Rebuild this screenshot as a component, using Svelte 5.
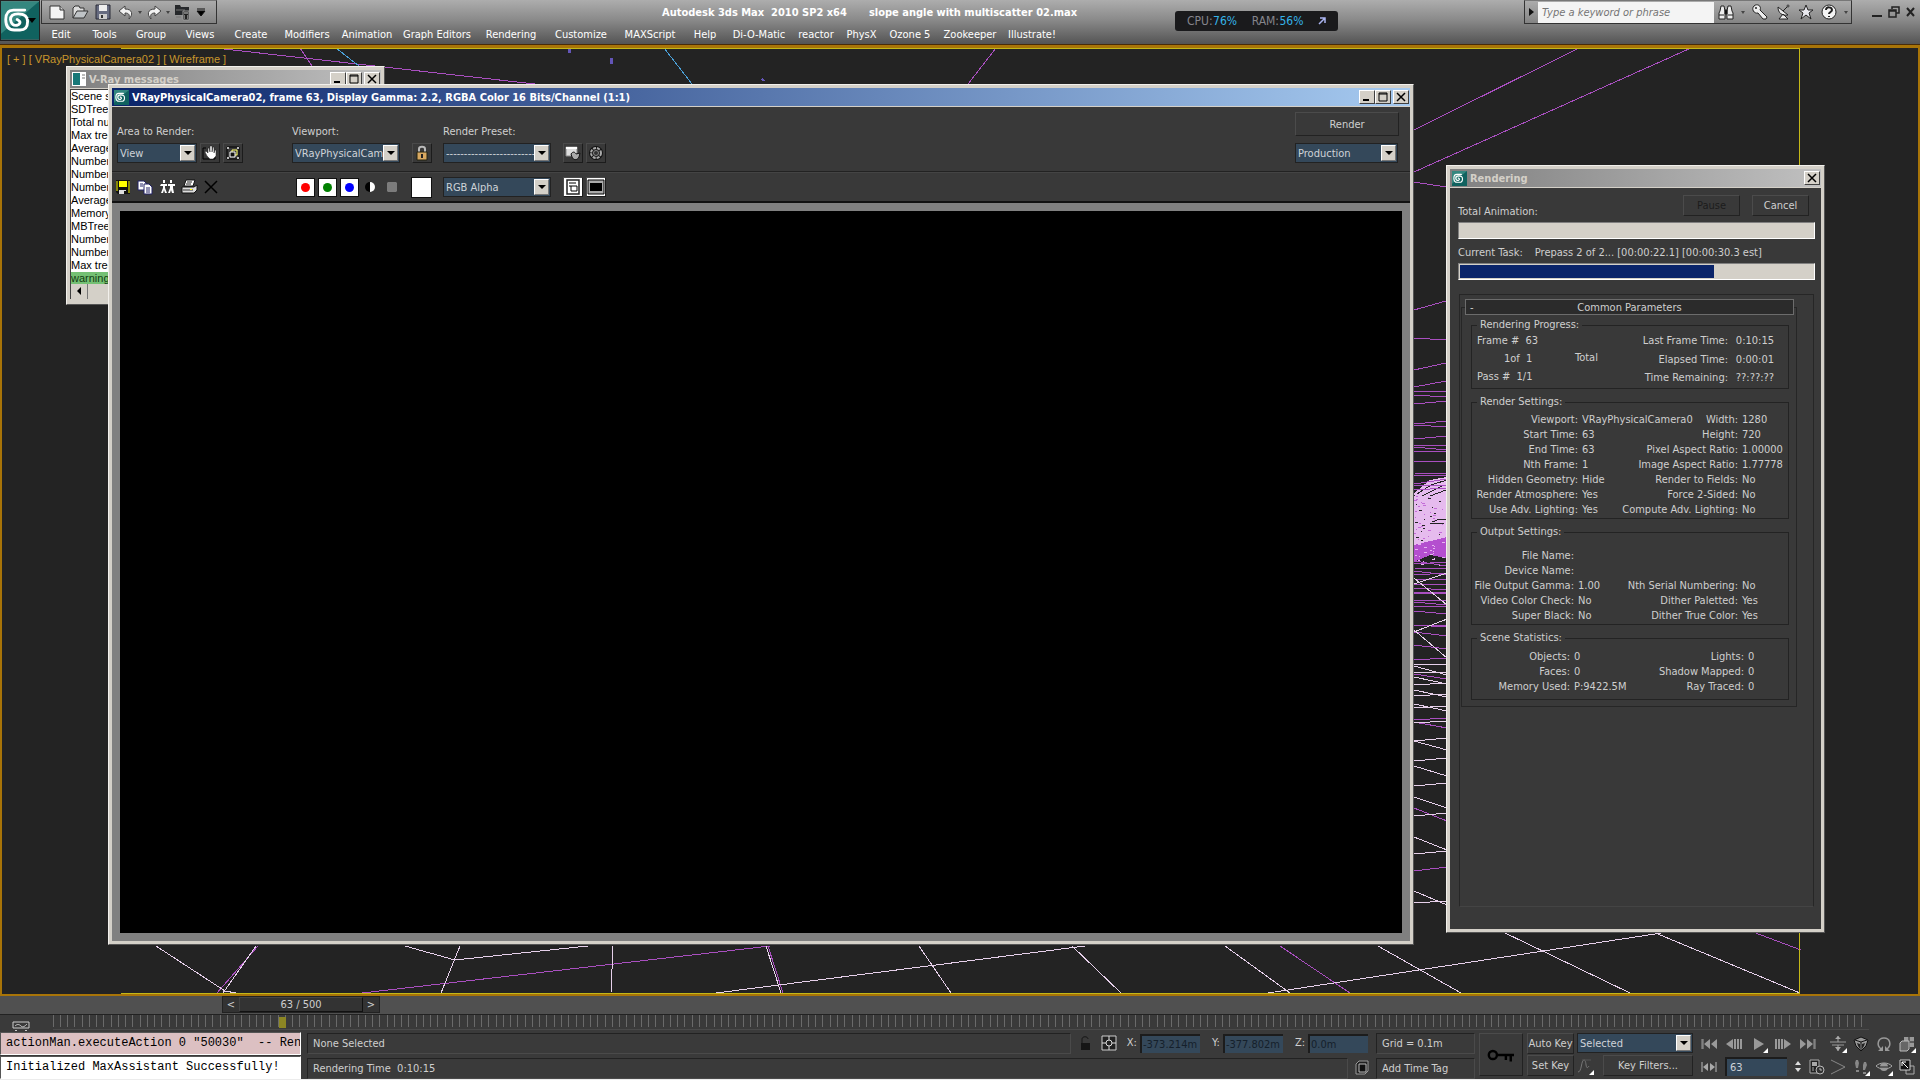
<script lang="ts">
    const menus = ["Edit", "Tools", "Group", "Views", "Create", "Modifiers", "Animation", "Graph Editors", "Rendering", "Customize", "MAXScript", "Help", "Di-O-Matic", "reactor", "PhysX", "Ozone 5", "Zookeeper", "Illustrate!"];

    const messages = ["Scene scale", "SDTree: built", "Total number", "Max tree depth", "Average tree", "Number of rays", "Number of leafs", "Number of faces", "Average faces", "Memory usage", "MBTree: built", "Number of rays", "Number of leafs", "Max tree size"];

    const settings = [
        ["Viewport:", "VRayPhysicalCamera02", "Width:", "1280"],
        ["Start Time:", "63", "Height:", "720"],
        ["End Time:", "63", "Pixel Aspect Ratio:", "1.00000"],
        ["Nth Frame:", "1", "Image Aspect Ratio:", "1.77778"],
        ["Hidden Geometry:", "Hide", "Render to Fields:", "No"],
        ["Render Atmosphere:", "Yes", "Force 2-Sided:", "No"],
        ["Use Adv. Lighting:", "Yes", "Compute Adv. Lighting:", "No"]
    ];
    const output = [
        ["File Name:", "", "", ""],
        ["Device Name:", "", "", ""],
        ["File Output Gamma:", "1.00", "Nth Serial Numbering:", "No"],
        ["Video Color Check:", "No", "Dither Paletted:", "Yes"],
        ["Super Black:", "No", "Dither True Color:", "Yes"]
    ];
    const statistics = [
        ["Objects:", "0", "Lights:", "0"],
        ["Faces:", "0", "Shadow Mapped:", "0"],
        ["Memory Used:", "P:9422.5M", "Ray Traced:", "0"]
    ];

    let frame = $state("63");
    let channels = $state([true, true, true]);
    let taskProgress = $state(72);

    // wireframe edges: x1 y1 x2 y2
    const violet = [
        [215, 48, 535, 84], [300, 48, 312, 66], [996, 48, 968, 84], [1579, 48, 1414, 130], [1691, 48, 1414, 172],
        [1414, 182, 1446, 187], [1414, 310, 1446, 301], [1414, 338, 1446, 340], [1414, 370, 1446, 363],
        [1414, 387, 1446, 381], [1414, 391, 1446, 392], [1414, 395, 1446, 397],
        [258, 946, 217, 993], [362, 993, 770, 946], [768, 946, 783, 993], [1280, 946, 1350, 993], [1753, 932, 1801, 950]
    ];
    const pale = [
        [156, 946, 225, 991], [225, 991, 236, 993], [256, 946, 223, 993], [405, 946, 455, 960], [455, 960, 588, 946],
        [460, 946, 441, 993], [613, 946, 611, 993], [766, 946, 781, 993], [919, 946, 951, 993], [716, 993, 1085, 946],
        [1072, 946, 1121, 993], [1225, 946, 1290, 993], [1268, 993, 1668, 932], [1378, 946, 1461, 993],
        [1503, 932, 1630, 993], [1653, 932, 1800, 993]
    ];
    // edges seen in the strip between the two windows: left y, right y
    const stripViolet = [
        [404, 401], [424, 421], [425, 427], [439, 436], [445, 445], [447, 450], [452, 451], [462, 461], [473, 474],
        [476, 475], [484, 479], [486, 485], [490, 488], [561, 566], [564, 562], [568, 569], [571, 575], [575, 573],
        [579, 580], [585, 584], [588, 590], [592, 592], [594, 593], [600, 600], [602, 605], [606, 606], [611, 614],
        [625, 627], [626, 625], [632, 636], [645, 649], [660, 658], [674, 679], [720, 718], [722, 728], [808, 821], [871, 867]
    ];
    const stripPale = [
        [578, 605], [584, 573], [630, 658], [632, 619], [665, 664], [666, 675], [673, 672], [677, 684], [685, 683],
        [690, 697], [696, 694], [704, 711], [708, 706], [723, 721], [741, 738], [741, 750], [761, 758], [766, 776],
        [786, 783], [797, 808], [816, 813], [837, 850], [854, 851], [891, 905], [903, 901]
    ];
    const speckles = Array.from({ length: 70 }, (_, i) => [1414 + ((i * i * 7) % 31), 495 + ((i * 31) % 71), 1 + (i % 3)]);

    const lines = (list: number[][]) => list.map(([a, b, c, d]) => `M${a} ${b}L${c} ${d}`).join("");
    const strip = (list: number[][]) => list.map(([a, b]) => `M1414 ${a}L1447 ${b}`).join("");
    const ticks = Array.from({ length: 251 }, (_, i) => `M${i} 0V12`).join("");

    const icons: Record<string, string> = {
        new: `<path d="M1 2h10l4 4v9H1z" fill="#f4f4f4" stroke="#333"/><path d="M11 2v4h4" fill="#ccc" stroke="#333"/>`,
        open: `<path d="M1 14V4l2-2h4l1 2h4v3" fill="#ddd" stroke="#333"/><path d="M1 14l4-7h11l-4 7z" fill="#bfc3c6" stroke="#333"/>`,
        disk: `<path d="M1 1h14v14H1z" fill="#666b80" stroke="#2b2d38"/><path d="M4 1h8v6H4z" fill="#eee"/><path d="M4 10h8v5H4z" fill="#ccc"/><path d="M6 11h2v3H6z" fill="#333"/>`,
        undo: `<path d="M7 2L1 7l6 5V9c4 0 5 2 4 6 4-4 4-10-4-10z" fill="#f2f2f2" stroke="#444"/>`,
        redo: `<path d="M9 2l6 5-6 5V9c-4 0-5 2-4 6C1 11 1 5 9 5z" fill="#f2f2f2" stroke="#444"/>`,
        project: `<path d="M1 1h5l1 2h8v8H1z" fill="#26282b"/><path d="M2 6h9M2 13h5" stroke="#777"/><path d="M9 7h6v9H9z" fill="#222" stroke="#999"/><path d="M10 9h4M10 12h1M13 12h1M10 14h1M13 14h1" stroke="#ccc"/>`,
        drop: `<path d="M4 5h8M4 7h8l-4 5z" stroke="#111"/>`,
        binoculars: `<path d="M2 7l1-5h3l1 5v8H1V9zM9 7l1-5h3l1 5 1 2v6H9z" fill="#eee" stroke="#222"/><path d="M7 6h2v4H7zM1 11h5M10 11h5" stroke="#222"/>`,
        key: `<path d="M2 2c3-3 8 0 6 4l7 7-1 2h-3l-5-6C2 10-1 5 2 2z" fill="#eee" stroke="#222"/><circle cx="4" cy="4" r="1" fill="#222"/>`,
        dish: `<path d="M3 3c0 6 4 9 10 8zM4 15h9l-5-5zM8 7l5-5" fill="#eee" stroke="#222"/><circle cx="13" cy="2" r="1" fill="#fff" stroke="#222"/>`,
        star: `<path d="M8 1l2 5h5l-4 3 2 6-5-4-5 4 2-6-4-3h5z" fill="#e8e8ee" stroke="#222"/>`,
        help: `<circle cx="8" cy="8" r="7" fill="#f4f4f4" stroke="#222"/><path d="M5 6c0-4 6-3 6 0 0 2-3 2-3 4M8 12v1" fill="none" stroke="#222" stroke-width="2"/>`,
        hand: `<path d="M4 3H1v11h12v-3" fill="none" stroke="#000"/><path d="M5 11L3 7l1-1 2 2V3h1l1 4V1h2v6l1-5h1v6l1-3h1v6l-3 3H8z" fill="#fff" stroke="#222" stroke-width=".5"/>`,
        region: `<path d="M2 2h12v12H2z" fill="none" stroke="#000"/><path d="M2 2h2v2H2zM12 2h2v2h-2zM2 12h2v2H2zM12 12h2v2h-2z" fill="#bbb"/><path d="M7 5h5v5H7z" fill="none" stroke="#ff6"/><path d="M5 7h5v5H5z" fill="#111" stroke="#fff"/>`,
        lock: `<path d="M5 7V4c0-3 6-3 6 0v3" fill="none" stroke="#bbb" stroke-width="2"/><path d="M3 7h10v8H3z" fill="#d8a860" stroke="#221"/><path d="M8 9v4" stroke="#222" stroke-width="2"/>`,
        setup: `<path d="M1 2h11v9H1z" fill="#ddd" stroke="#888"/><path d="M1 2h11v2H1z" fill="#fff"/><path d="M6 9c2-3 4-2 5 0l4-1-1 4c-2 4-6 3-7 0z" fill="#aaa" stroke="#111"/>`,
        environment: `<circle cx="8" cy="8" r="7" fill="#111"/><circle cx="8" cy="8" r="5" fill="#222" stroke="#aaa" stroke-width="2" stroke-dasharray="3 1"/><circle cx="8" cy="8" r="2.5" fill="#333" stroke="#888"/>`,
        save: `<path d="M1 1h14v14H3l-2-2z" fill="#111"/><path d="M4 2h8v6H4z" fill="#ff0"/><path d="M2 2v10M14 2v12" stroke="#ff0"/><path d="M4 11h7v4H4z" fill="#ddd"/><path d="M9 12h2v3H9z" fill="#111"/>`,
        copy: `<path d="M1 2h6l2 2v7H1z" fill="#fff" stroke="#226"/><path d="M7 5h5l3 3v7H7z" fill="#fff" stroke="#226"/><path d="M3 5h3M3 7h3M9 9h4M9 11h4M9 13h4" stroke="#226"/>`,
        clone: `<path d="M4 1h2v3H4zM2 5h6v2H6v2l2 5H6l-1-3-1 3H2l2-5V7H1zM11 1h2v3h-2zM9 5h7v2h-2v2l1 5h-2l-1-3-1 3H9l2-5V7H9z" fill="#fff"/>`,
        print: `<path d="M5 1h9l-2 6H3z" fill="#fff" stroke="#111"/><path d="M6 3h5M5 5h5" stroke="#222"/><path d="M1 8h12l3-2v5l-3 3H1z" fill="#ddd" stroke="#111"/><path d="M2 11h10" stroke="#333"/><path d="M9 10h2v1H9z" fill="#ff0"/>`,
        clear: `<path d="M2 2l12 12M14 2L2 14" stroke="#000" stroke-width="1.5"/>`,
        alpha: `<path d="M8 3a5 5 0 000 10z" fill="#000"/><path d="M8 3a5 5 0 010 10z" fill="#fff"/>`,
        mono: `<path d="M4 3h8l1 1v8l-1 1H4l-1-1V4z" fill="#7c7c7c"/>`,
        overlay: `<path d="M2 1h12v14H2z" fill="#fff" stroke="#222" stroke-width="1.5"/><path d="M4 4h7M4 7h2" stroke="#000"/><path d="M6 7h6v5H6z" fill="#fff" stroke="#000"/>`,
        ui: `<path d="M0 1h16v14H0z" fill="#aaa" stroke="#000"/><path d="M2 4h12v8H2z" fill="#000"/>`,
        curves: `<path d="M0 4h16v6H0z" fill="none" stroke="#ccc"/><path d="M2 8c2-2 4-2 6 0s4 0 6-2M2 13l1-1 1 1M12 13l1-1 1 1" fill="none" stroke="#ccc"/>`,
        padlock: `<path d="M5 8V4c0-3 6-3 6 0" fill="none" stroke="#161616"/><path d="M4 8h9v7H4z" fill="#161616"/>`,
        transform: `<path d="M1 1h14v14H1z" fill="#222" stroke="#ccc"/><circle cx="8" cy="8" r="3" fill="none" stroke="#ddd"/><path d="M8 1v4M8 11v4M1 8h4M11 8h4" stroke="#ddd"/>`,
        cube: `<path d="M2 4l3-3h9v10l-3 3H2z" fill="#222" stroke="#999"/><path d="M5 4h7v8H5z" fill="#111" stroke="#bbb"/>`,
        start: `<path d="M1 3v10M2 3v10" stroke="#999"/><path d="M9 3v10L3 8zM16 3v10l-6-5z" fill="#999"/>`,
        prev: `<path d="M7 3v10L0 8z" fill="#999"/><path d="M9 3v10M12 3v10M15 3v10" stroke="#999" stroke-width="2"/>`,
        play: `<path d="M3 2v12l10-6z" fill="#999"/>`,
        next: `<path d="M9 3v10l7-5z" fill="#999"/><path d="M1 3v10M4 3v10M7 3v10" stroke="#999" stroke-width="2"/>`,
        end: `<path d="M14 3v10M15 3v10" stroke="#999"/><path d="M0 3v10l6-5zM7 3v10l6-5z" fill="#999"/>`,
        keymode: `<path d="M1 3v10M15 3v10" stroke="#bbb"/><path d="M7 4v8L2 8zM9 4v8l5-4z" fill="#aaa"/>`,
        timeconfig: `<path d="M1 1h9v13H1z" fill="#222" stroke="#aaa"/><path d="M3 3h5v4H3z" fill="#aaa"/><path d="M3 9h2M3 11h2" stroke="#aaa"/><circle cx="11" cy="11" r="4" fill="#333" stroke="#bbb"/><path d="M11 9v2h2" fill="none" stroke="#bbb"/>`,
        dolly: `<path d="M8 0v6M8 9v6" stroke="#aaa"/><path d="M5 3l3-3 3 3zM5 11h6l-3 4z" fill="#aaa"/><path d="M0 6h16M2 9h12" stroke="#999"/>`,
        perspective: `<path d="M1 4l7-3 7 3-2 6-5 5-5-5z" fill="#999" stroke="#111"/><path d="M2 4l6 2 6-2M8 6v8" fill="none" stroke="#111"/><path d="M4 7l3 1v5L5 10zM12 7L9 8v5l2-3z" fill="#222"/>`,
        roll: `<path d="M5 13C0 9 2 2 8 2s8 7 3 11" fill="none" stroke="#999" stroke-width="1.5"/><path d="M2 15h5v-5zM14 15H9v-5z" fill="#999"/>`,
        extents: `<path d="M5 1h10v10H5z" fill="#999"/><path d="M10 1v10M5 6h10" stroke="#222"/><path d="M1 7l2-2h7v8l-2 2H1z" fill="#666" stroke="#bbb"/>`,
        fov: `<path d="M1 1l14 7-14 7" fill="none" stroke="#888"/>`,
        walk: `<path d="M3 1h2l1 3-1 5H3L2 4zM3 11h3v2H3zM11 3h2l1 3-2 5h-2V6zM10 13h3v2h-3z" fill="#888"/>`,
        orbit: `<path d="M0 7c4-4 12-4 16 0-4 4-12 4-16 0z" fill="none" stroke="#aaa"/><circle cx="8" cy="8" r="4" fill="#999"/><path d="M4 8h8" stroke="#222"/>`,
        maximize: `<path d="M7 7h8v8H7z" fill="none" stroke="#aaa"/><path d="M1 1h10v10H1z" fill="#111" stroke="#ccc"/><path d="M9 9L3 3M3 7V3h4" fill="none" stroke="#fff"/>`,
        curve: `<path d="M1 14c4 0 3-12 6-12s1 12 5 6" fill="none" stroke="#777"/><path d="M5 2h9" stroke="#555"/>`,
        bigkey: `<circle cx="3" cy="8" r="2.5" fill="none" stroke="#000" stroke-width="1.5"/><path d="M6 8h10M11 8v3M14 8v4" stroke="#000" stroke-width="1.5"/>`
    };
    const playback = ["start", "prev", "play", "next", "end"];
    const navigation = ["dolly", "perspective", "roll", "extents", "fov", "walk", "orbit", "maximize"];
    const flyouts = ["play", "dolly", "extents", "walk", "orbit", "curve"];
</script>

{#snippet icon(name: string)}
    <svg class="icon" viewBox="0 0 16 16" aria-hidden="true">
        {@html icons[name]}
        {#if flyouts.includes(name)}<path d="M17 12v5h-5z" fill="#fff" />{/if}
    </svg>
{/snippet}

{#snippet logo()}
    <svg class="logo" viewBox="0 0 40 40" aria-hidden="true">
        <rect width="40" height="40" fill="#10625f" />
        <path d="M0 0h40L0 34z" fill="#34877f" />
        <path d="M25 9H13Q5 9 5 19q0 11 9 11h6q8 0 8-9 0-8-10-8-8 0-8 6 1 7 7 6 6-3 0-6" fill="none" stroke="#fff" stroke-width="3" stroke-linecap="round" />
    </svg>
{/snippet}

{#snippet windowButton(kind: string)}
    <button class="win-button {kind}" aria-label={kind}>
        <svg viewBox="0 0 12 10" aria-hidden="true">
            {#if kind === "minimize"}
                <path d="M2 8h6" stroke="#000" stroke-width="2" />
            {:else if kind === "maximize"}
                <path d="M2 1h8v8H2zM2 2h8" fill="none" stroke="#000" stroke-width="1" />
            {:else}
                <path d="M2 1l8 8M10 1L2 9" stroke="#000" stroke-width="1.5" />
            {/if}
        </svg>
    </button>
{/snippet}

{#snippet dropdown(id: string, label: string, value: string)}
    <span class="dropdown {id}">
        <select {id} aria-label={label}><option>{value}</option></select>
        <span class="arrow"><svg viewBox="0 0 8 4" aria-hidden="true"><path d="M0 0h8L4 4z" /></svg></span>
    </span>
{/snippet}

{#snippet pairs(rows: string[][])}
    {#each rows as [label, value, label2, value2]}
        <div class="pair-row">
            <dt>{label}</dt><dd><span>{value}</span></dd>
            <dt>{label2}</dt><dd>{value2}</dd>
        </div>
    {/each}
{/snippet}

<div class="app">
    <header>
        <button class="app-button" aria-label="Application menu">
            {@render logo()}
            <svg class="caret" viewBox="0 0 8 5" aria-hidden="true"><path d="M0 0h8L4 5z" /></svg>
        </button>
        <div class="header-rows">
            <div class="title-row">
                <div class="quick">
                    <button aria-label="New">{@render icon("new")}</button>
                    <button aria-label="Open">{@render icon("open")}</button>
                    <button aria-label="Save">{@render icon("disk")}</button>
                    <button aria-label="Undo">{@render icon("undo")}</button>
                    <i class="tiny"></i>
                    <button aria-label="Redo">{@render icon("redo")}</button>
                    <i class="tiny"></i>
                    <button aria-label="Project folder">{@render icon("project")}</button>
                    <button aria-label="Customize toolbar" class="small">{@render icon("drop")}</button>
                </div>
                <div class="title"><span>Autodesk 3ds Max&nbsp; 2010 SP2 x64</span><span>slope angle with multiscatter 02.max</span></div>
                <div class="search">
                    <i class="side-arrow"></i>
                    <input type="text" placeholder="Type a keyword or phrase" aria-label="Search" />
                    <button aria-label="Find">{@render icon("binoculars")}</button>
                    <i class="tiny"></i>
                    <button aria-label="Subscription">{@render icon("key")}</button>
                    <button aria-label="Communication">{@render icon("dish")}</button>
                    <button aria-label="Favorites">{@render icon("star")}</button>
                    <button aria-label="Help">{@render icon("help")}</button>
                    <i class="tiny"></i>
                </div>
                <div class="app-controls">
                    <button aria-label="Minimize application"><svg viewBox="0 0 12 12"><path d="M1 10h10" stroke="#222" stroke-width="2" /></svg></button>
                    <button aria-label="Restore application"><svg viewBox="0 0 12 12"><path d="M4 3V1h7v6H8M1 4h7v7H1zM1 5h7" fill="none" stroke="#222" stroke-width="1.5" /></svg></button>
                    <button aria-label="Close application"><svg viewBox="0 0 12 12"><path d="M2 2l7 8M9 2l-7 8" stroke="#222" stroke-width="2" /></svg></button>
                </div>
            </div>
            <nav>
                {#each menus as menu}
                    <button>{menu}</button>
                {/each}
            </nav>
        </div>
        <div class="meter">
            <span>CPU: <b>76%</b></span><span>RAM: <b>56%</b></span>
            <svg viewBox="0 0 8 8" aria-hidden="true"><path d="M1 7l6-6M2 1h5v5" fill="none" stroke="#aab4f0" stroke-width="1.5" /></svg>
        </div>
    </header>

    <main>
        <svg class="wireframe" viewBox="0 48 1920 946" preserveAspectRatio="none" shape-rendering="crispEdges" aria-hidden="true">
            <path d="M1414 493L1430 480L1447 477V548L1414 553z" fill="#e6bbee" />
            <path d="M1414 545L1447 537V558L1430 555L1414 562z" fill="#b44fcf" />
            {#each speckles as [x, y, w]}
                <rect {x} {y} width={w} height="1" fill={y > 540 ? "#e6b4f0" : y % 3 ? "#c46bd8" : "#232323"} />
            {/each}
            <path d="M1432 522l8-3h7M1430 524l14-1M1417 494l14-9 16-5M1422 496l20-10M1430 496l16-6" fill="none" stroke="#232323" />
            <path d={lines(violet) + strip(stripViolet)} fill="none" stroke="#a94fc0" />
            <path d={lines(pale) + strip(stripPale)} fill="none" stroke="#e6d0ea" />
            <path d="M336 48L359 66M664 48L692 84" stroke="#4aa0d8" />
            <path d="M568 48h3v5h-3zM610 58h3v6h-3zM760 80l2-2 3 3h-2z" fill="#6355b8" />
            <path d="M121 48H1799V993H121" fill="none" stroke="#c4b818" />
        </svg>
        <div class="view-label">[ + ] [ VRayPhysicalCamera02 ] [ Wireframe ]</div>

        <section class="window messages">
            <div class="titlebar inactive">
                <svg class="doc" viewBox="0 0 14 14" aria-hidden="true"><path d="M0 0h14v14H0z" fill="#fff" /><path d="M1 1h7v12H1z" fill="#187878" /><path d="M10 3h3M10 6h3" stroke="#777" /></svg>
                <h2>V-Ray messages</h2>
                {@render windowButton("minimize")}{@render windowButton("maximize")}{@render windowButton("close")}
            </div>
            <ul>
                {#each messages as message}
                    <li>{message}</li>
                {/each}
                <li class="warning">warning: no camera</li>
            </ul>
            <div class="scroll"><button aria-label="Scroll left"><svg viewBox="0 0 4 8"><path d="M4 0v8L0 4z" /></svg></button><span></span></div>
        </section>

        <section class="window render">
            <div class="titlebar active">
                {@render logo()}
                <h2>VRayPhysicalCamera02, frame 63, Display Gamma: 2.2, RGBA Color 16 Bits/Channel (1:1)</h2>
                {@render windowButton("minimize")}{@render windowButton("maximize")}{@render windowButton("close")}
            </div>
            <div class="toolbar first">
                <div>
                    <label for="area">Area to Render:</label>
                    <div class="tools">
                        {@render dropdown("area", "Area to Render", "View")}
                        <button class="tool" aria-label="Edit region">{@render icon("hand")}</button>
                        <button class="tool" aria-label="Auto region">{@render icon("region")}</button>
                    </div>
                </div>
                <div>
                    <label for="viewport">Viewport:</label>
                    <div class="tools">
                        {@render dropdown("viewport", "Viewport", "VRayPhysicalCamera02")}
                        <button class="tool apart" aria-label="Lock to viewport">{@render icon("lock")}</button>
                    </div>
                </div>
                <div>
                    <label for="preset">Render Preset:</label>
                    <div class="tools">
                        {@render dropdown("preset", "Render Preset", "-------------------------")}
                        <button class="tool apart" aria-label="Render setup">{@render icon("setup")}</button>
                        <button class="tool" aria-label="Environment">{@render icon("environment")}</button>
                    </div>
                </div>
                <div class="go">
                    <button class="flat">Render</button>
                    {@render dropdown("production", "Render mode", "Production")}
                </div>
            </div>
            <div class="toolbar second">
                <div class="tools plain">
                    <button aria-label="Save image">{@render icon("save")}</button>
                    <button aria-label="Copy image">{@render icon("copy")}</button>
                    <button aria-label="Clone window">{@render icon("clone")}</button>
                    <button aria-label="Print image">{@render icon("print")}</button>
                    <button aria-label="Clear">{@render icon("clear")}</button>
                </div>
                <div class="tools channels">
                    {#each ["red", "green", "blue"] as color, i}
                        <button class="channel {color}" aria-label={`${color} channel`} aria-pressed={channels[i]} onclick={() => channels[i] = !channels[i]}></button>
                    {/each}
                    <button class="bare" aria-label="Alpha channel">{@render icon("alpha")}</button>
                    <button class="bare" aria-label="Monochrome">{@render icon("mono")}</button>
                    <button class="swatch" aria-label="Pixel color"></button>
                </div>
                <div class="tools">
                    {@render dropdown("channel-display", "Channel display", "RGB Alpha")}
                    <button class="tool white apart" aria-label="Toggle overlays">{@render icon("overlay")}</button>
                    <button class="tool white" aria-label="Toggle interface">{@render icon("ui")}</button>
                </div>
            </div>
            <div class="frame"><div class="canvas"></div></div>
        </section>

        <section class="window rendering">
            <div class="titlebar inactive">
                {@render logo()}
                <h2>Rendering</h2>
                {@render windowButton("close")}
            </div>
            <div class="progress">
                <div class="progress-head">
                    <span>Total Animation:</span>
                    <button class="flat" disabled>Pause</button>
                    <button class="flat">Cancel</button>
                </div>
                <div class="bar"></div>
                <p><span>Current Task:</span><span>Prepass 2 of 2... [00:00:22.1] [00:00:30.3 est]</span></p>
                <div class="bar"><div style:width="{taskProgress}%"></div></div>
            </div>
            <div class="panel">
                <div class="rollout">
                    <button class="rollout-head"><span>-</span>Common Parameters</button>
                    <fieldset>
                        <legend>Rendering Progress:</legend>
                        <div class="current">
                            <div><p>Frame #&nbsp; 63</p><p class="indent">1of&nbsp; 1</p><p>Pass #&nbsp; 1/1</p></div>
                            <p class="total">Total</p>
                            <dl>
                                <dt>Last Frame Time:</dt><dd>0:10:15</dd>
                                <dt>Elapsed Time:</dt><dd>0:00:01</dd>
                                <dt>Time Remaining:</dt><dd>??:??:??</dd>
                            </dl>
                        </div>
                    </fieldset>
                    <fieldset>
                        <legend>Render Settings:</legend>
                        <dl class="pairs">{@render pairs(settings)}</dl>
                    </fieldset>
                    <fieldset>
                        <legend>Output Settings:</legend>
                        <dl class="pairs output">{@render pairs(output)}</dl>
                    </fieldset>
                    <fieldset>
                        <legend>Scene Statistics:</legend>
                        <dl class="pairs statistics">{@render pairs(statistics)}</dl>
                    </fieldset>
                </div>
            </div>
        </section>
    </main>

    <div class="slider">
        <div>
            <button aria-label="Previous frame">&lt;</button>
            <span>63 / 500</span>
            <button aria-label="Next frame">&gt;</button>
        </div>
    </div>

    <div class="trackbar">
        <button aria-label="Open mini curve editor">{@render icon("curves")}</button>
        <div class="track">
            <svg viewBox="0 0 250 12" preserveAspectRatio="none" shape-rendering="crispEdges" aria-hidden="true">
                <path d={ticks} stroke="#6a6a6a" vector-effect="non-scaling-stroke" />
            </svg>
            <i style:left="{+frame / 5}%"></i>
        </div>
    </div>

    <footer>
        <div class="listener">
            <div class="macro">actionMan.executeAction 0 "50030"&nbsp; -- Render</div>
            <div>Initialized MaxAssistant Successfully!</div>
        </div>
        <div class="status">
            <div class="status-row">
                <div class="prompt">None Selected</div>
                <button class="bare" aria-label="Selection lock">{@render icon("padlock")}</button>
                <button class="bare" aria-label="Absolute transform">{@render icon("transform")}</button>
                <label>X:<input value="-373.214m" /></label>
                <label>Y:<input value="-377.802m" /></label>
                <label>Z:<input value="0.0m" /></label>
                <div class="cell">Grid = 0.1m</div>
            </div>
            <div class="status-row">
                <div class="prompt">Rendering Time&nbsp; 0:10:15</div>
                <button class="bare" aria-label="Adaptive degradation">{@render icon("cube")}</button>
                <button class="cell">Add Time Tag</button>
            </div>
        </div>
        <button class="big-key flat" aria-label="Set keys">{@render icon("bigkey")}</button>
        <div class="keys">
            <button class="flat">Auto Key</button>
            {@render dropdown("selected", "Key set", "Selected")}
            <button class="flat">Set Key</button>
            <div class="filters">
                <button class="bare" aria-label="Default tangents">{@render icon("curve")}</button>
                <button class="flat">Key Filters...</button>
            </div>
        </div>
        <div class="playback">
            <div class="transport">
                {#each playback as name}
                    <button class="bare" aria-label={name}>{@render icon(name)}</button>
                {/each}
            </div>
            <div>
                <button class="bare" aria-label="Key mode">{@render icon("keymode")}</button>
                <input class="frame-input" aria-label="Current frame" bind:value={frame} />
                <span class="spinner"><i></i><i></i></span>
                <button class="bare" aria-label="Time configuration">{@render icon("timeconfig")}</button>
            </div>
        </div>
        <div class="navigation">
            {#each navigation as name}
                <button class="bare" aria-label={name}>{@render icon(name)}</button>
            {/each}
        </div>
    </footer>
</div>

<style>
:global(body) {
    background: #3a3a3a;
}

.app, .app button, .app input, .app select {
    font-family: "DejaVu Sans Condensed", "Noto Sans", sans-serif;
    font-size: 11px;
    box-sizing: border-box;
}

.app {
    display: flex;
    flex-direction: column;
    min-height: 100vh;
    color: #cfcfcf;
    line-height: 14px;
    background: #3a3a3a;
}

.app * {
    box-sizing: border-box;
}

button {
    background: none;
    border: none;
    color: inherit;
    padding: 0;
}

p, dl, dd, h2, ul {
    margin: 0;
    padding: 0;
}

.icon {
    display: block;
    width: 16px;
    height: 16px;
    overflow: visible;
}

/* header */
header {
    display: flex;
    position: relative;
    height: 45px;
    background: linear-gradient(#adadad, #8a8a8a 45%, #545454);
    border-bottom: 1px solid #4a2c08;
    color: #fff;
}

.app-button {
    position: relative;
    width: 40px;
    height: 41px;
    border: 1px solid #222;
}

.app-button .logo {
    width: 100%;
    height: 100%;
}

.caret {
    position: absolute;
    right: 3px;
    top: 17px;
    width: 8px;
    height: 5px;
}

.header-rows {
    flex: 1;
    min-width: 0;
}

.title-row {
    display: flex;
    height: 24px;
}

.quick, .search {
    display: flex;
    align-items: center;
    border: 1px solid #333;
    border-top-color: #777;
}

.quick {
    width: 176px;
    margin-left: 1px;
    padding-left: 7px;
    gap: 7px;
}

.quick .tiny {
    margin: 0 -3px;
}

.quick .small {
    margin-left: -4px;
}

.tiny {
    border: 2px solid transparent;
    border-top: 3px solid #444;
    border-bottom: 0;
}

.title {
    flex: 1;
    display: flex;
    gap: 22px;
    padding: 1px 0 0 445px;
    align-items: center;
    font-weight: bold;
    white-space: nowrap;
}

.search {
    width: 328px;
    margin-right: 19px;
    padding-right: 3px;
    gap: 7px;
    color: #222;
}

.side-arrow {
    border: 4px solid transparent;
    border-left: 5px solid #111;
    border-right: 0;
    margin: 0 -3px 0 4px;
}

.search input {
    flex: 1;
    min-width: 0;
    height: 21px;
    margin-right: -3px;
    border: 0;
    padding: 0 4px;
    font-style: italic;
    background: #f4f4f4;
}

.app-controls {
    display: flex;
    gap: 5px;
    padding-right: 3px;
    align-items: center;
}

.app-controls svg {
    display: block;
    width: 12px;
    height: 12px;
}

nav {
    display: grid;
    grid-template-columns: 42px 45px 48px 50px 52px 60px 60px 80px 68px 72px 66px 44px 64px 50px 41px 56px 64px 60px;
    height: 20px;
}

nav button {
    white-space: nowrap;
    padding-top: 1px;
}

.meter {
    position: absolute;
    left: 1175px;
    top: 11px;
    width: 163px;
    height: 20px;
    padding: 0 12px;
    display: flex;
    align-items: center;
    justify-content: space-between;
    border-radius: 3px;
    background: #1a1a1c;
    color: #85858c;
    font-size: 12px;
}

.meter b {
    font-weight: normal;
    color: #35b4e8;
    margin-left: -3px;
}

.meter svg {
    width: 8px;
    height: 8px;
}

/* viewport and its windows */
main {
    position: relative;
    flex: 1;
    border: 2px solid #a87408;
    border-top-width: 3px;
    background: #232323;
}

.wireframe {
    position: absolute;
    left: -2px;
    top: 0;
    width: calc(100% + 4px);
    height: 100%;
}

.view-label {
    position: absolute;
    left: 5px;
    top: 4px;
    color: #c8962c;
    font-family: "Liberation Sans", sans-serif;
    font-size: 11px;
}

.window {
    position: absolute;
    display: flex;
    flex-direction: column;
    padding: 3px;
    background: #d4d0c8;
    border: 1px solid #f2f0ec;
    border-right-color: #555;
    border-bottom-color: #555;
}

.titlebar {
    display: flex;
    align-items: center;
    height: 18px;
    padding: 0 1px 0 2px;
    margin-bottom: 1px;
    flex: none;
}

.titlebar h2 {
    flex: 1;
    padding: 2px 0 0 3px;
    font-size: 11px;
    font-weight: bold;
    white-space: nowrap;
    overflow: hidden;
}

.titlebar .logo {
    width: 15px;
    height: 15px;
}

.active {
    background: linear-gradient(90deg, #0a246a, #a6caf0);
    color: #fff;
}

.inactive {
    background: linear-gradient(90deg, #808080, #c0c0c0);
    color: #d4d0c8;
}

.doc {
    width: 14px;
    height: 14px;
}

.win-button {
    width: 16px;
    height: 14px;
    background: #d4d0c8;
    border: 1px solid #fff;
    border-right-color: #404040;
    border-bottom-color: #404040;
}

.win-button.close {
    margin-left: 2px;
}

.win-button svg {
    display: block;
    width: 12px;
    height: 10px;
    margin: 0 auto;
}

.messages {
    left: 64px;
    top: 18px;
    width: 319px;
    height: 239px;
    padding-bottom: 5px;
}

.messages ul {
    flex: 1;
    list-style: none;
    background: #fff;
    color: #000;
    border-left: 1px solid #404040;
    border-top: 1px solid #404040;
    font-family: "Liberation Sans", sans-serif;
    line-height: 13px;
    overflow: hidden;
}

.messages li {
    white-space: nowrap;
}

.messages .warning {
    background: #74c074;
    color: #123c12;
}

.scroll {
    display: flex;
    height: 15px;
    border-left: 1px solid #404040;
}

.scroll button {
    width: 17px;
    border-right: 1px solid #777;
}

.scroll svg {
    width: 4px;
    height: 8px;
}

.scroll span {
    flex: 1;
}

.render {
    left: 106px;
    right: 504px;
    top: 36px;
    bottom: 49px;
}

.toolbar {
    display: grid;
    grid-template-columns: 175px 151px 180px 1fr;
    padding: 0 11px 0 5px;
    background: #393939;
    flex: none;
}

.first {
    height: 65px;
    padding-top: 18px;
    border-bottom: 1px solid #222;
}

.second {
    height: 31px;
    align-items: center;
    border-top: 1px solid #444;
    border-bottom: 2px solid #111;
}

.toolbar label {
    display: block;
    height: 18px;
}

.tools {
    display: flex;
    align-items: center;
    gap: 3px;
    height: 20px;
}

.plain {
    gap: 6px;
    margin-left: -2px;
}

.channels {
    gap: 3px;
    padding-left: 4px;
}

.dropdown {
    display: inline-grid;
    height: 20px;
    align-items: center;
    border: 1px solid #222;
    background: #34485a;
}

.dropdown > * {
    grid-area: 1 / 1;
}

.dropdown select {
    appearance: none;
    width: 100%;
    height: 18px;
    padding: 0 14px 0 2px;
    border: 0;
    background: none;
    color: #cfd3d8;
}

.arrow {
    display: flex;
    align-items: center;
    justify-content: center;
    justify-self: end;
    width: 15px;
    height: 16px;
    margin-right: 1px;
    pointer-events: none;
    background: #d4d0c8;
    border: 1px solid #fff;
    border-right-color: #777;
    border-bottom-color: #777;
}

.arrow svg {
    width: 8px;
    height: 4px;
}

.area {
    width: 80px;
}

.viewport, .preset, .channel-display {
    width: 108px;
}

.production {
    width: 103px;
}

.tool {
    display: flex;
    align-items: center;
    justify-content: center;
    width: 20px;
    height: 20px;
    border: 1px solid #4a4a4a;
    border-right-color: #1c1c1c;
    border-bottom-color: #1c1c1c;
}

.apart {
    margin-left: 9px;
}

.white {
    background: #fff;
}

.channel {
    display: flex;
    align-items: center;
    justify-content: center;
    width: 19px;
    height: 19px;
    background: #fff;
    border: 1px solid #111;
}

.channel::before {
    content: "";
    width: 9px;
    height: 9px;
    border-radius: 50%;
}

.channel.red::before {
    background: #f00;
}

.channel.green::before {
    background: #008000;
}

.channel.blue::before {
    background: #00f;
}

.channels .bare {
    width: 19px;
}

.swatch {
    width: 21px;
    height: 21px;
    margin-left: 5px;
    background: #fff;
    border: 1px solid #111;
}

.go {
    display: flex;
    flex-direction: column;
    align-items: flex-start;
    justify-self: end;
    gap: 7px;
    margin-top: -13px;
}

.flat {
    border: 1px solid #4b4b4b;
    border-right-color: #222;
    border-bottom-color: #222;
}

.flat:disabled {
    color: #1c1c1c;
}

.go .flat {
    width: 104px;
    height: 24px;
}

.frame {
    flex: 1;
    display: flex;
    padding: 8px;
    background: #808080;
}

.canvas {
    flex: 1;
    background: #000;
}

.rendering {
    right: 93px;
    top: 117px;
    width: 379px;
    bottom: 61px;
}

.progress {
    padding: 7px 6px 14px 8px;
    background: #393939;
}

.progress-head {
    display: flex;
    height: 27px;
    gap: 12px;
    margin-right: 6px;
}

.progress-head span {
    flex: 1;
    padding-top: 10px;
}

.progress-head .flat {
    width: 57px;
    height: 21px;
}

.bar {
    height: 17px;
    padding: 1px;
    background: #d4d0c8;
    border: 1px solid #808080;
    border-right-color: #fff;
    border-bottom-color: #fff;
}

.bar div {
    height: 100%;
    background: #0a246a;
}

.progress p {
    display: flex;
    gap: 12px;
    height: 24px;
    padding-top: 4px;
    align-items: center;
    white-space: nowrap;
}

.panel {
    flex: 1;
    padding: 4px 17px 24px 11px;
    background: #393939;
    position: relative;
}

.panel::before {
    content: "";
    position: absolute;
    inset: 0 7px 22px 9px;
    border: 1px solid #262626;
    border-bottom-color: #444;
}

.rollout {
    position: relative;
    width: 336px;
    margin-top: 9px;
    padding: 0 8px 0 9px;
    border: 1px solid #262626;
}

.rollout-head {
    display: block;
    position: relative;
    width: 329px;
    height: 16px;
    margin: -9px 0 3px -6px;
    background: #2b2b2b;
    border: 1px solid #6c6c6c;
}

.rollout-head span {
    position: absolute;
    left: 4px;
}

fieldset {
    width: 318px;
    min-width: 0;
    margin: 0 0 6px;
    padding: 0;
    border: 1px solid #232323;
}

legend {
    margin-left: 5px;
    padding: 0 3px;
}

.current {
    display: grid;
    grid-template-columns: 98px 1fr auto;
    height: 56px;
    padding: 0 14px 0 5px;
    line-height: 18px;
}

.indent {
    padding-left: 27px;
}

.total {
    padding-top: 17px;
}

.current dl {
    display: grid;
    grid-template-columns: auto 42px;
    column-gap: 4px;
    text-align: right;
}

.pairs {
    padding: 4px 0 0;
}

.pair-row {
    display: grid;
    grid-template-columns: 106px 30px minmax(0, 1fr) 46px;
    column-gap: 4px;
    height: 15px;
    white-space: nowrap;
}

.pair-row dt {
    text-align: right;
}

.pair-row dd span {
    display: block;
    width: 111px;
    overflow: hidden;
}

.output {
    padding-top: 10px;
}

.output .pair-row {
    grid-template-columns: 102px 30px minmax(0, 1fr) 46px;
}

.statistics {
    padding: 5px 0 4px;
}

.statistics .pair-row {
    grid-template-columns: 98px 30px minmax(0, 1fr) 40px;
}

/* time slider and track bar */
.slider {
    height: 19px;
    padding-left: 222px;
    background: #505050;
    border-bottom: 1px solid #222;
}

.slider div {
    display: flex;
    width: 158px;
    height: 17px;
    background: #333;
    border: 1px solid #222;
    text-align: center;
}

.slider button {
    width: 16px;
}

.slider span {
    flex: 1;
    border: 1px solid #444;
    border-right-color: #111;
    border-bottom-color: #111;
}

.trackbar {
    display: flex;
    height: 15px;
    padding: 0 51px 0 13px;
}

.trackbar button {
    width: 40px;
}

.trackbar .icon {
    margin-top: 3px;
}

.track {
    position: relative;
    flex: 1;
    border-bottom: 1px solid #4a4a4a;
}

.track svg {
    display: block;
    width: 100%;
    height: 12px;
}

.track i {
    position: absolute;
    top: 2px;
    width: 7px;
    height: 11px;
    margin-left: -3px;
    background: #8c8624;
}

/* status area */
footer {
    display: flex;
    height: 50px;
    padding-top: 2px;
    border-bottom: 1px solid #ececec;
}

.listener {
    display: grid;
    grid-template-rows: 1fr 1fr;
    gap: 1px;
    width: 301px;
    margin-right: 6px;
    color: #000;
    font-family: "Liberation Mono", monospace;
    font-size: 12px;
}

.listener div {
    padding: 3px 5px;
    background: #fff;
    border: 1px solid #555;
    border-right-color: #fff;
    border-bottom-color: #fff;
    white-space: pre;
    overflow: hidden;
}

.listener .macro {
    background: #dcc0c2;
}

.status {
    flex: 1;
    display: grid;
    grid-template-rows: 1fr 1fr;
    gap: 3px;
    min-width: 0;
}

.status-row {
    display: flex;
    align-items: center;
    gap: 4px;
}

.prompt, .cell {
    height: 21px;
    border: 1px solid #222;
    border-right-color: #4a4a4a;
    border-bottom-color: #4a4a4a;
    line-height: 20px;
    padding: 0 5px;
    text-align: left;
}

.prompt {
    flex: 1;
    white-space: nowrap;
}

.cell {
    width: 99px;
    flex: none;
}

.status .bare {
    width: 20px;
    padding: 0 2px;
}

.status label {
    display: flex;
    align-items: center;
    gap: 3px;
    margin: 0 4px;
}

.status input, .frame-input {
    width: 60px;
    height: 19px;
    padding: 0 1px;
    border: 2px solid #1c1c1c;
    border-right: 0;
    border-bottom: 0;
    background: #34485a;
    color: #15202b;
}

.big-key {
    width: 44px;
    margin: 1px 4px;
    height: 43px;
}

.big-key .icon {
    width: 26px;
    height: 26px;
    margin: 0 auto;
}

.keys {
    display: grid;
    grid-template-columns: 47px 116px;
    grid-template-rows: 21px 21px;
    gap: 1px 3px;
    padding-top: 1px;
}

.filters {
    display: flex;
    justify-content: space-between;
}

.filters .flat {
    width: 90px;
}

.playback {
    width: 124px;
    margin-left: 8px;
}

.playback > div {
    display: flex;
    align-items: center;
    justify-content: space-between;
    height: 23px;
}

.playback .transport {
    padding-right: 9px;
}

.playback .frame-input {
    width: 62px;
    padding: 0 3px;
    color: #cfd3d8;
}

.spinner {
    display: grid;
    gap: 3px;
}

.spinner i {
    border: 3px solid transparent;
    border-top: 0;
    border-bottom: 4px solid #ddd;
}

.spinner i:last-child {
    border-top: 4px solid #ddd;
    border-bottom: 0;
}

.navigation {
    display: grid;
    grid-template-columns: repeat(4, 23px);
    grid-template-rows: 23px 23px;
    align-items: center;
    justify-items: center;
    margin: 0 2px 0 1px;
}
</style>
